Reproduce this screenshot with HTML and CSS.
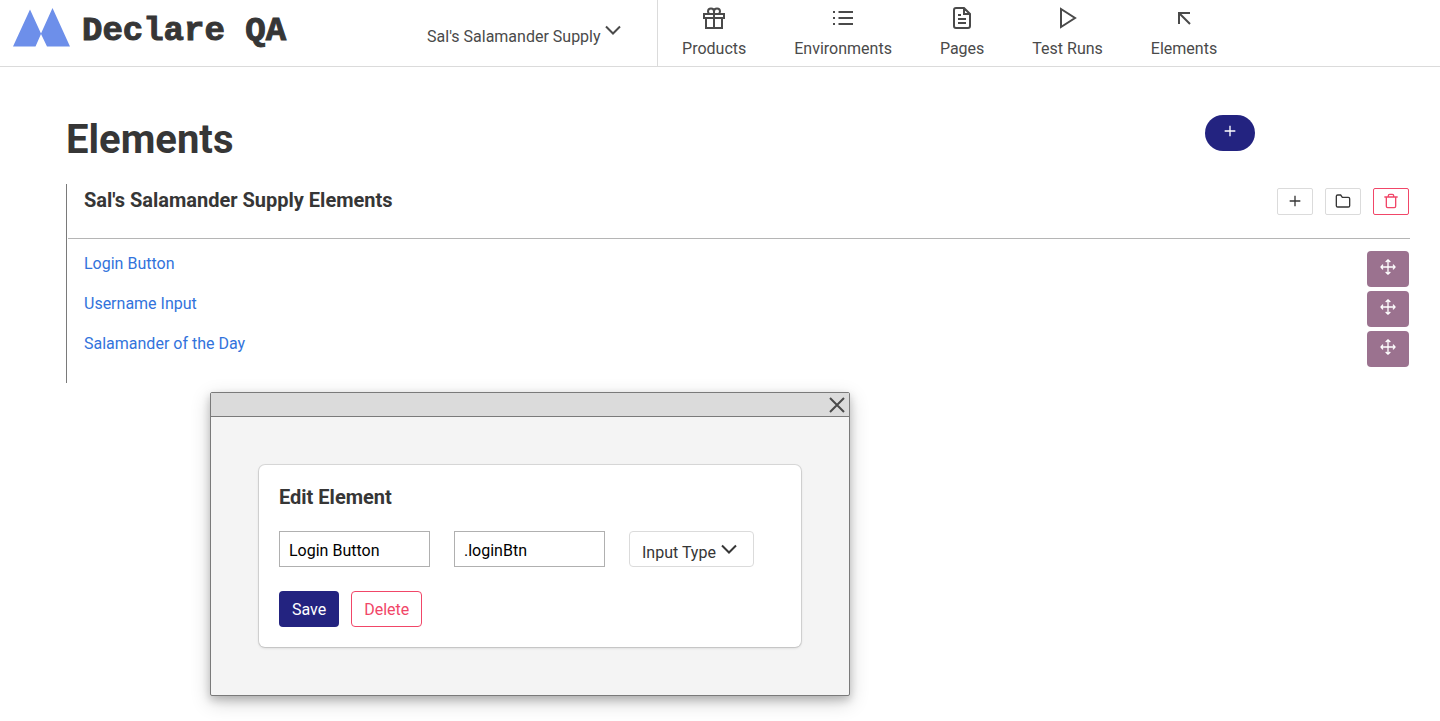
FILE: index.html
```html
<!DOCTYPE html>
<html lang="en">
<head>
<meta charset="utf-8">
<title>Declare QA - Elements</title>
<link rel="stylesheet" href="styles.css">
</head>
<body>
<svg class="sprite" aria-hidden="true">
  <symbol id="chevron" viewBox="0 0 24 24"><path d="M5 8.500l7 7 7-7"/></symbol>
  <symbol id="plus" viewBox="0 0 24 24"><path d="M12 4v16M4 12h16"/></symbol>
  <symbol id="move" viewBox="0 0 24 24"><path d="M12 1.500v21M1.500 12h21M8.500 4.500L12 1.500l3.500 3M8.500 19.500l3.500 3 3.500-3M4.500 8.500l-3 3.500 3 3.500M19.500 8.500l3 3.500-3 3.500"/></symbol>
</svg>
<header class="navbar">
  <a class="brand" href="#">
    <svg class="brand-mark" viewBox="0 0 58 40" aria-hidden="true"><path d="M0 38.500L17 1.500l11 24L39.500 0 57 38.500H34l-6-12.500-5.500 12.500z"/></svg>
    <span class="brand-name">Declare QA</span>
  </a>
  <div class="picker">
    <div class="dropdown">
      <select class="dropdown-select" aria-label="Product"><option>Sal's Salamander Supply</option></select>
      <svg class="icon dropdown-icon" aria-hidden="true"><use href="#chevron"/></svg>
    </div>
  </div>
  <nav class="menu">
    <a class="menu-item" href="#"><svg class="icon" viewBox="0 0 24 24" aria-hidden="true"><path d="M2 8h20v4H2zM4 12h16v10H4zM12 8v14M12 8V5.500a3 3 0 0 1 6 0c0 1-.5 2-1.500 2.500M12 8V5.500a3 3 0 0 0-6 0c0 1 .5 2 1.500 2.500"/></svg>Products</a>
    <a class="menu-item" href="#"><svg class="icon" viewBox="0 0 24 24" aria-hidden="true"><path d="M7.500 6H22M7.500 12H22M7.500 18H22M2 6h2M2 12h2M2 18h2"/></svg>Environments</a>
    <a class="menu-item" href="#"><svg class="icon" viewBox="0 0 24 24" aria-hidden="true"><path d="M4 4a2 2 0 0 1 2-2h8l6 6v12a2 2 0 0 1-2 2H6a2 2 0 0 1-2-2zM14 2v6h6M8 9h3M8 13h8M8 17h8"/></svg>Pages</a>
    <a class="menu-item" href="#"><svg class="icon" viewBox="0 0 24 24" aria-hidden="true"><path d="M5 3v18l14-9z"/></svg>Test Runs</a>
    <a class="menu-item" href="#"><svg class="icon" viewBox="0 0 24 24" aria-hidden="true"><path d="M7 18V7h11M7 7l11 11"/></svg>Elements</a>
  </nav>
</header>
<main class="page">
  <div class="page-head">
    <h1 class="page-title">Elements</h1>
    <button class="add-button" type="button" aria-label="Add group"><svg class="icon-small" aria-hidden="true"><use href="#plus"/></svg></button>
  </div>
  <section class="group">
    <div class="group-head">
      <h2 class="heading">Sal's Salamander Supply Elements</h2>
      <div class="group-tools">
        <button class="tool" type="button" aria-label="Add element"><svg class="icon-small" aria-hidden="true"><use href="#plus"/></svg></button>
        <button class="tool" type="button" aria-label="Add folder"><svg class="icon-small" viewBox="0 0 24 24" aria-hidden="true"><path d="M2 5a2 2 0 0 1 2-2h4.500L11 6.500h9a2 2 0 0 1 2 2V19a2 2 0 0 1-2 2H4a2 2 0 0 1-2-2z"/></svg></button>
        <button class="tool tool-danger" type="button" aria-label="Delete group"><svg class="icon-small" viewBox="0 0 24 24" aria-hidden="true"><path d="M5 6v14a2 2 0 0 0 2 2h10a2 2 0 0 0 2-2V6M2 6h20M8 6V4a2 2 0 0 1 2-2h4a2 2 0 0 1 2 2v2"/></svg></button>
      </div>
    </div>
    <ul class="element-list">
      <li class="element"><a class="element-link" href="#">Login Button</a><button class="move" type="button" aria-label="Move Login Button"><svg class="icon-small" aria-hidden="true"><use href="#move"/></svg></button></li>
      <li class="element"><a class="element-link" href="#">Username Input</a><button class="move" type="button" aria-label="Move Username Input"><svg class="icon-small" aria-hidden="true"><use href="#move"/></svg></button></li>
      <li class="element"><a class="element-link" href="#">Salamander of the Day</a><button class="move" type="button" aria-label="Move Salamander of the Day"><svg class="icon-small" aria-hidden="true"><use href="#move"/></svg></button></li>
    </ul>
  </section>
</main>
<div class="window" role="dialog" aria-labelledby="edit-title">
  <div class="window-bar">
    <button class="close" type="button" aria-label="Close"><svg class="icon" viewBox="0 0 24 24" aria-hidden="true"><path d="M5 5l14 14M19 5L5 19"/></svg></button>
  </div>
  <div class="window-body">
    <form class="card">
      <h2 class="heading" id="edit-title">Edit Element</h2>
      <div class="fields">
        <input class="field" type="text" aria-label="Name" value="Login Button">
        <input class="field" type="text" aria-label="Selector" value=".loginBtn">
        <div class="dropdown dropdown-boxed">
          <select class="dropdown-select" aria-label="Input type"><option>Input Type</option></select>
          <svg class="icon dropdown-icon" aria-hidden="true"><use href="#chevron"/></svg>
        </div>
      </div>
      <div class="actions">
        <button class="button button-primary" type="button">Save</button>
        <button class="button button-danger" type="button">Delete</button>
      </div>
    </form>
  </div>
</div>
</body>
</html>
```
FILE: styles.css
```css
* { box-sizing: border-box; }
body {
  margin: 0;
  background: #fff;
  color: #363636;
  font: 16px/26px Roboto, "Liberation Sans", sans-serif;
}
h1, h2, ul { margin: 0; padding: 0; }
a { text-decoration: none; }
button, input, select { font: inherit; margin: 0; }
button { cursor: pointer; }
svg { display: block; fill: none; stroke: currentColor; stroke-width: 2; }
.sprite { position: absolute; width: 0; height: 0; }
.icon { width: 24px; height: 24px; }
.icon-small { width: 16px; height: 16px; }

.navbar {
  display: flex;
  border-bottom: 1px solid #dbdbdb;
  color: #4a4a4a;
}
.brand {
  display: flex;
  align-items: flex-start;
  gap: 11px;
  padding: 8px 0 0 13px;
  color: #363636;
}
.brand-mark { width: 58px; height: 40px; fill: #6d8fea; stroke: none; }
.brand-name {
  font: bold 34px/47px "Liberation Mono", monospace;
  -webkit-text-stroke: 1px currentColor;
  white-space: nowrap;
}
.picker { padding: 24px 32px 0 141px; border-right: 1px solid #dbdbdb; }
.menu { display: flex; }
.menu-item {
  display: flex;
  flex-direction: column;
  align-items: center;
  gap: 6px;
  padding: 6px 24px 4px;
  color: #4a4a4a;
  white-space: nowrap;
}

.dropdown { position: relative; display: inline-block; }
.dropdown-select {
  appearance: none;
  display: block;
  height: 26px;
  padding: 0 24px 0 0;
  border: 0;
  background: transparent;
  color: inherit;
}
.dropdown-icon { position: absolute; top: -6px; right: 0; pointer-events: none; }
.dropdown-boxed {
  height: 36px;
  padding: 8px 12px 0;
  border: 1px solid #dbdbdb;
  border-radius: 4px;
}
.dropdown-boxed .dropdown-icon { top: 5px; right: 12px; }

.page { padding: 48px 30px 0 66px; }
.page-head { display: grid; grid-template-columns: 1fr 360px; justify-items: start; }
.page-title { font-size: 40px; line-height: 50px; }
.add-button {
  display: flex;
  justify-content: center;
  justify-self: center;
  width: 50px;
  height: 36px;
  padding: 8px 0;
  border: 0;
  border-radius: 18px;
  background: #232380;
  color: #fff;
}
.group { margin-top: 19px; padding: 0 0 16px 1px; border-left: 1px solid #7a7a7a; }
.group-head {
  display: flex;
  justify-content: space-between;
  padding: 4px 1px 23px 16px;
  border-bottom: 1px solid #b5b5b5;
}
.heading { font-size: 20px; line-height: 24px; }
.group-tools { display: flex; gap: 12px; }
.tool {
  display: flex;
  justify-content: center;
  width: 36px;
  height: 27px;
  padding: 4px 0;
  border: 1px solid #dbdbdb;
  border-radius: 2px;
  background: #fff;
  color: #363636;
}
.tool-danger { border-color: #f14668; color: #f14668; }
.element-list {
  display: flex;
  flex-direction: column;
  gap: 4px;
  padding: 12px 1px 0 16px;
  list-style: none;
}
.element { display: flex; justify-content: space-between; align-items: flex-start; }
.element-link { color: #3273dc; }
.move {
  display: flex;
  justify-content: center;
  width: 42px;
  height: 36px;
  padding: 8px 0;
  border: 0;
  border-radius: 4px;
  background: #9b728f;
  color: #fff;
}

.window {
  position: absolute;
  top: 392px;
  left: 210px;
  width: 640px;
  border: 1px solid #7a7a7a;
  border-radius: 2px;
  background: #f4f4f4;
  box-shadow: 0 4px 8px rgba(0, 0, 0, .2), 0 6px 20px rgba(0, 0, 0, .19);
}
.window-bar {
  display: flex;
  justify-content: flex-end;
  height: 24px;
  border-bottom: 1px solid #7a7a7a;
  background: #dbdbdb;
}
.close { padding: 0; border: 0; background: transparent; color: #4a4a4a; }
.window-body { padding: 48px; }
.card {
  padding: 20px;
  border-radius: 6px;
  background: #fff;
  box-shadow: 0 1px 3px rgba(0, 0, 0, .15), 0 0 0 1px rgba(0, 0, 0, .1);
}
.fields { display: flex; flex-wrap: wrap; gap: 24px; margin-top: 22px; }
.field {
  width: 151px;
  height: 36px;
  padding: 2px 9px 0;
  border: 1px solid #b0b0b0;
  background: #fff;
  color: #000;
}
.actions { display: flex; gap: 12px; margin-top: 24px; }
.button {
  height: 36px;
  padding: 2px 12px 0;
  border: 1px solid transparent;
  border-radius: 4px;
  background: #fff;
}
.button-primary { background: #232380; color: #fff; }
.button-danger { border-color: #f14668; color: #f14668; }
```
